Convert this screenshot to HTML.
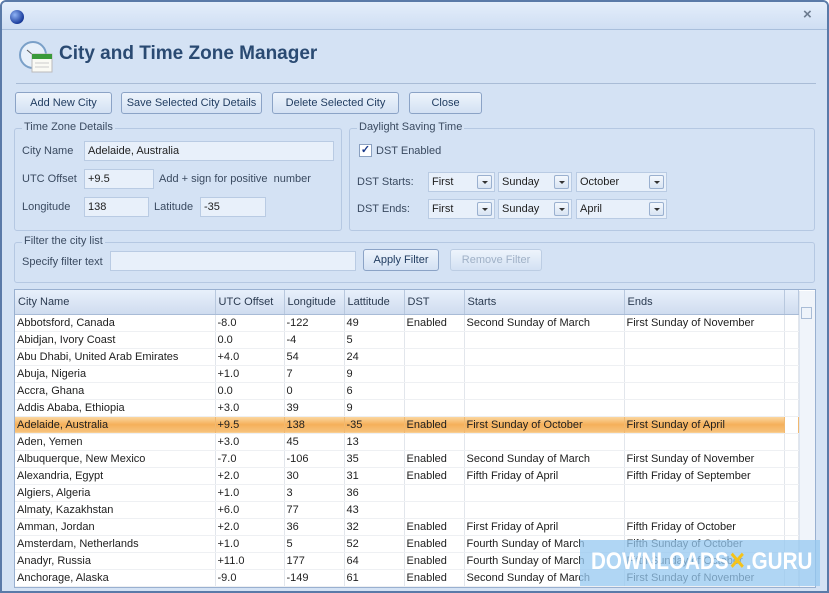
<!DOCTYPE html>
<html><head><style>
*{box-sizing:border-box;margin:0;padding:0}
body{width:829px;height:593px;overflow:hidden;font-family:"Liberation Sans",sans-serif;font-size:11px;color:#1e1e1e;background:#fff}
.win{position:absolute;left:0;top:0;width:829px;height:593px;background:#d4e2f4;border:2px solid #5a7aa8;border-radius:6px 6px 0 0;overflow:hidden}
.tb{position:absolute;left:0;top:0;width:825px;height:28px;background:linear-gradient(#e4eefb,#cfdef3);border-bottom:1px solid #a9bfdc}
.abs{position:absolute;white-space:nowrap}
.btn{position:absolute;height:22px;border:1px solid #8ba3c6;border-radius:3px;background:linear-gradient(#eef4fc,#d3e1f3);text-align:center;line-height:20px;color:#1e3a5f;white-space:nowrap}
.grp{position:absolute;border:1px solid #b5c8e2;border-radius:3px}
.lg{position:absolute;top:-8px;left:7px;background:#d4e2f4;padding:0 2px;color:#3a4a60;white-space:nowrap}
.lbl{position:absolute;color:#3a4a60;white-space:nowrap}
.inp{position:absolute;height:20px;background:#e8f0fa;border:1px solid #b9cbe3;padding-left:3px;line-height:18px}
.cb{position:absolute;height:20px;background:#e8f0fa;border:1px solid #b9cbe3;padding-left:3px;line-height:18px}
.cb i{position:absolute;right:2px;top:2px;width:15px;height:14px;border:1px solid #9ab0cf;background:linear-gradient(#f4f8fd,#d8e4f3);border-radius:2px}
.cb i:after{content:"";position:absolute;left:4px;top:5px;border:3px solid transparent;border-top:3px solid #333;border-bottom:0}
table{border-collapse:collapse;position:absolute;left:13px;top:288px;table-layout:fixed}
td{height:17px;border-right:1px solid #e2e6ec;border-bottom:1px solid #eef0f3;padding-left:2px;white-space:nowrap;overflow:hidden;line-height:16px}
th{height:24px;font-weight:normal;text-align:left;padding-left:3px;color:#2a3a50;background:linear-gradient(#e8f0fb,#cfdcef);border-right:1px solid #b8c8de;border-bottom:1px solid #a8bbd6;white-space:nowrap}
tr.sel td{background:linear-gradient(#fbd9a5,#f5b05a 50%,#f7c37e);border-right-color:#f0b870}
</style></head><body>
<div class="win">
<div class="tb"></div>
<div class="abs" style="left:8px;top:8px;width:14px;height:14px;border-radius:50%;background:radial-gradient(circle at 35% 35%,#8fb3f5,#1a3c9c 70%,#0a1a50)"></div>
<div class="abs" style="left:801px;top:4px;font-size:15px;color:#6d7c90;font-weight:bold">×</div>
<svg class="abs" style="left:16px;top:38px" width="36" height="34"><circle cx="15" cy="15" r="13" fill="#e7f0fa" stroke="#7aa0c8" stroke-width="2"/><line x1="15" y1="15" x2="9" y2="10" stroke="#555"/><rect x="14" y="14" width="20" height="18" fill="#fafaf4" stroke="#bbb"/><rect x="14" y="14" width="20" height="5" fill="#3a9a3a"/><line x1="17" y1="23" x2="31" y2="23" stroke="#ccc"/><line x1="17" y1="27" x2="31" y2="27" stroke="#ccc"/></svg>
<div class="abs" style="left:57px;top:41px;font-size:19px;font-weight:bold;color:#2a4a72">City and Time Zone Manager</div>
<div class="abs" style="left:14px;top:81px;width:800px;height:1px;background:#a9bcd6"></div>
<div class="btn" style="left:13px;top:90px;width:97px">Add New City</div>
<div class="btn" style="left:119px;top:90px;width:141px">Save Selected City Details</div>
<div class="btn" style="left:270px;top:90px;width:127px">Delete Selected City</div>
<div class="btn" style="left:407px;top:90px;width:73px">Close</div>

<div class="grp" style="left:12px;top:126px;width:328px;height:103px"><span class="lg">Time Zone Details</span></div>
<div class="lbl" style="left:20px;top:143px">City Name</div>
<div class="inp" style="left:82px;top:139px;width:250px">Adelaide, Australia</div>
<div class="lbl" style="left:20px;top:171px">UTC Offset</div>
<div class="inp" style="left:82px;top:167px;width:70px">+9.5</div>
<div class="lbl" style="left:157px;top:171px">Add + sign for positive&nbsp; number</div>
<div class="lbl" style="left:20px;top:199px">Longitude</div>
<div class="inp" style="left:82px;top:195px;width:65px">138</div>
<div class="lbl" style="left:152px;top:199px">Latitude</div>
<div class="inp" style="left:198px;top:195px;width:66px">-35</div>

<div class="grp" style="left:347px;top:126px;width:466px;height:103px"><span class="lg">Daylight Saving Time</span></div>
<div class="abs" style="left:357px;top:142px;width:13px;height:13px;border:1px solid #8aa0c0;background:#fff;font-size:11px;line-height:11px;text-align:center;color:#1a3a8a;font-weight:bold">✓</div>
<div class="lbl" style="left:374px;top:143px">DST Enabled</div>
<div class="lbl" style="left:355px;top:174px">DST Starts:</div>
<div class="lbl" style="left:355px;top:201px">DST Ends:</div>
<div class="cb" style="left:426px;top:170px;width:67px">First<i></i></div>
<div class="cb" style="left:496px;top:170px;width:74px">Sunday<i></i></div>
<div class="cb" style="left:574px;top:170px;width:91px">October<i></i></div>
<div class="cb" style="left:426px;top:197px;width:67px">First<i></i></div>
<div class="cb" style="left:496px;top:197px;width:74px">Sunday<i></i></div>
<div class="cb" style="left:574px;top:197px;width:91px">April<i></i></div>

<div class="grp" style="left:12px;top:240px;width:801px;height:41px"><span class="lg">Filter the city list</span></div>
<div class="lbl" style="left:20px;top:254px">Specify filter text</div>
<div class="inp" style="left:108px;top:249px;width:246px"></div>
<div class="btn" style="left:361px;top:247px;width:76px">Apply Filter</div>
<div class="btn" style="left:448px;top:247px;width:92px;color:#9fb0c6;border-color:#bccde3">Remove Filter</div>

<div class="abs" style="left:12px;top:287px;width:802px;height:299px;background:#fff;border:1px solid #99b0d0"></div>
<table>
<colgroup><col style="width:200px"><col style="width:69px"><col style="width:60px"><col style="width:60px"><col style="width:60px"><col style="width:160px"><col style="width:160px"><col style="width:14px"></colgroup>
<tr><th>City Name</th><th>UTC Offset</th><th>Longitude</th><th>Lattitude</th><th>DST</th><th>Starts</th><th>Ends</th><th></th></tr>
<tr><td>Abbotsford, Canada</td><td>-8.0</td><td>-122</td><td>49</td><td>Enabled</td><td>Second Sunday of March</td><td>First Sunday of November</td><td></td></tr>
<tr><td>Abidjan, Ivory Coast</td><td>0.0</td><td>-4</td><td>5</td><td></td><td></td><td></td><td></td></tr>
<tr><td>Abu Dhabi, United Arab Emirates</td><td>+4.0</td><td>54</td><td>24</td><td></td><td></td><td></td><td></td></tr>
<tr><td>Abuja, Nigeria</td><td>+1.0</td><td>7</td><td>9</td><td></td><td></td><td></td><td></td></tr>
<tr><td>Accra, Ghana</td><td>0.0</td><td>0</td><td>6</td><td></td><td></td><td></td><td></td></tr>
<tr><td>Addis Ababa, Ethiopia</td><td>+3.0</td><td>39</td><td>9</td><td></td><td></td><td></td><td></td></tr>
<tr class="sel"><td>Adelaide, Australia</td><td>+9.5</td><td>138</td><td>-35</td><td>Enabled</td><td>First Sunday of October</td><td>First Sunday of April</td><td style="background:#fff"></td></tr>
<tr><td>Aden, Yemen</td><td>+3.0</td><td>45</td><td>13</td><td></td><td></td><td></td><td></td></tr>
<tr><td>Albuquerque, New Mexico</td><td>-7.0</td><td>-106</td><td>35</td><td>Enabled</td><td>Second Sunday of March</td><td>First Sunday of November</td><td></td></tr>
<tr><td>Alexandria, Egypt</td><td>+2.0</td><td>30</td><td>31</td><td>Enabled</td><td>Fifth Friday of April</td><td>Fifth Friday of September</td><td></td></tr>
<tr><td>Algiers, Algeria</td><td>+1.0</td><td>3</td><td>36</td><td></td><td></td><td></td><td></td></tr>
<tr><td>Almaty, Kazakhstan</td><td>+6.0</td><td>77</td><td>43</td><td></td><td></td><td></td><td></td></tr>
<tr><td>Amman, Jordan</td><td>+2.0</td><td>36</td><td>32</td><td>Enabled</td><td>First Friday of April</td><td>Fifth Friday of October</td><td></td></tr>
<tr><td>Amsterdam, Netherlands</td><td>+1.0</td><td>5</td><td>52</td><td>Enabled</td><td>Fourth Sunday of March</td><td>Fifth Sunday of October</td><td></td></tr>
<tr><td>Anadyr, Russia</td><td>+11.0</td><td>177</td><td>64</td><td>Enabled</td><td>Fourth Sunday of March</td><td>Fifth Sunday of October</td><td></td></tr>
<tr><td>Anchorage, Alaska</td><td>-9.0</td><td>-149</td><td>61</td><td>Enabled</td><td>Second Sunday of March</td><td>First Sunday of November</td><td></td></tr>
</table>
<div class="abs" style="left:797px;top:289px;width:16px;height:296px;background:#f0f4fa;border-left:1px solid #dde5f0"></div>
<div class="abs" style="left:799px;top:305px;width:11px;height:12px;border:1px solid #a9bcd6;background:#eef3fa"></div>
<div class="abs" style="left:578px;top:538px;width:240px;height:46px;background:rgba(150,200,240,0.75)"></div>
<div class="abs" style="left:589px;top:545px;font-size:24px;font-weight:bold;color:#fff;transform:scaleX(0.86);transform-origin:left">DOWNLOADS<span style="color:#f5c31a">✕</span>.GURU</div>
</div>
</body></html>
